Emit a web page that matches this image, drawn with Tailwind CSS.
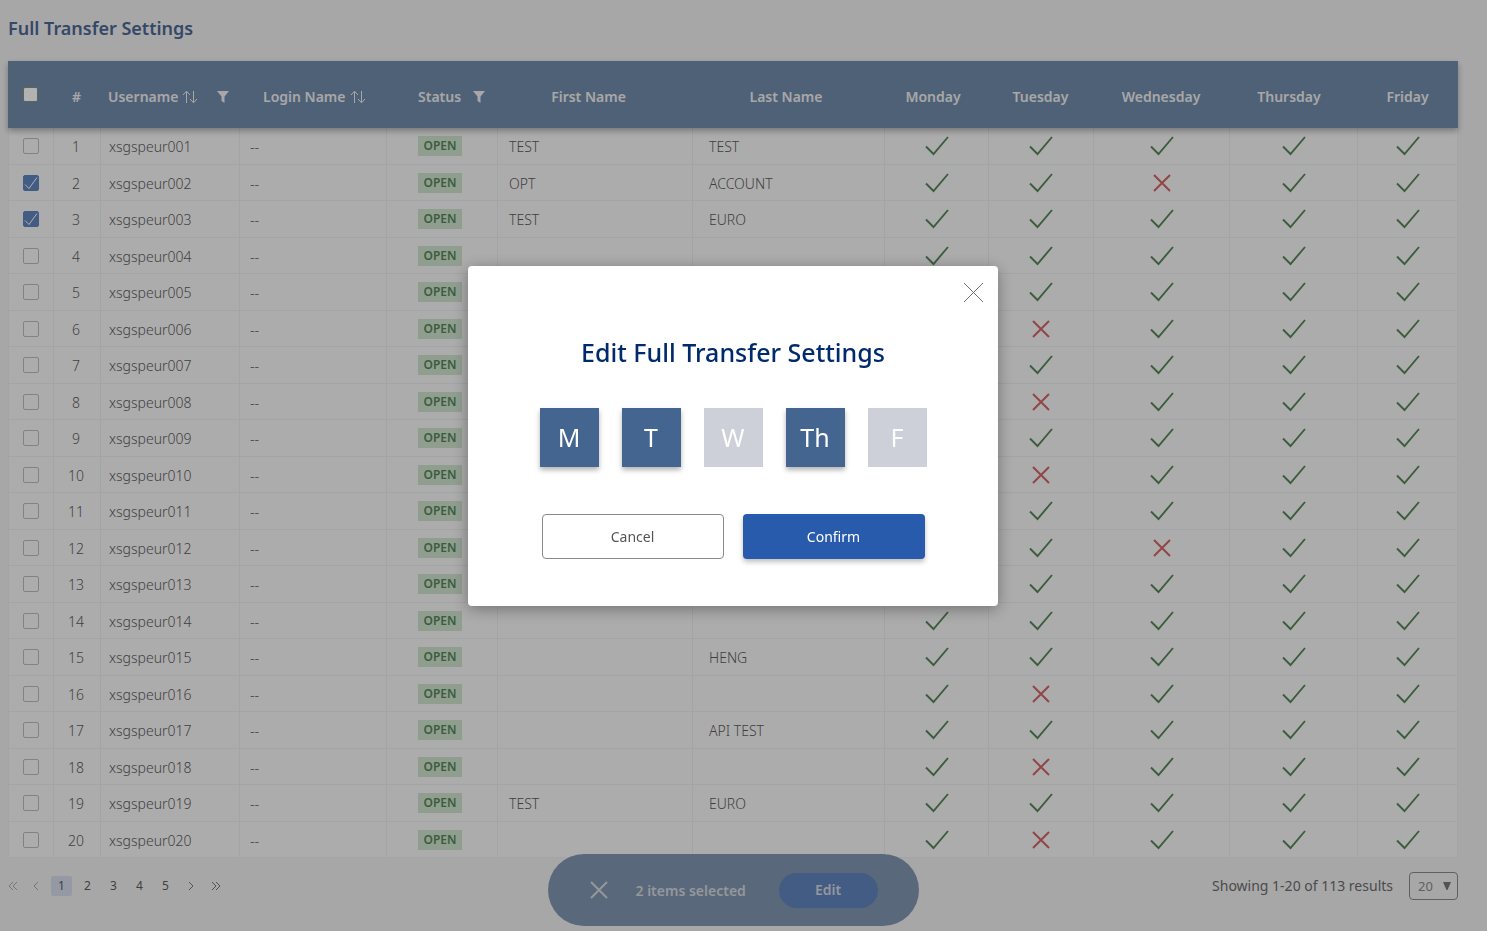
<!DOCTYPE html>
<html lang="en">
<head>
<meta charset="utf-8">
<meta name="viewport" content="width=device-width, initial-scale=1">
<title>Full Transfer Settings</title>
<script src="https://cdn.jsdelivr.net/npm/@tailwindcss/browser@4"></script>
</head>
<body class="min-h-screen overflow-x-hidden bg-[#f0f0f0] font-['Noto_Sans','Open_Sans',sans-serif] text-sm text-[#5c5c5c]">

<svg class="hidden" aria-hidden="true">
  <symbol id="tick" viewBox="0 0 24 20"><path d="M1 10.500L8.500 18L23 1" fill="none" stroke="currentColor" stroke-width="1.900"/></symbol>
  <symbol id="cross" viewBox="0 0 18 18"><path d="M1 1L17 17M17 1L1 17" fill="none" stroke="currentColor" stroke-width="2"/></symbol>
  <symbol id="sort" viewBox="0 0 16 14"><path d="M4.500 13V1.500M1 5L4.500 1.200L8 5M11.500 1V12.500M8 9L11.500 12.800L15 9" fill="none" stroke="currentColor"/></symbol>
  <symbol id="funnel" viewBox="0 0 12 12"><path d="M0 0H12L7.500 5.500V12L4.500 10V5.500Z" fill="currentColor"/></symbol>
</svg>

<main class="pl-2 pr-[29px]">
  <h1 class="pt-3.5 text-lg leading-7 font-semibold text-[#4d6796]">Full Transfer Settings</h1>

  <table class="mt-[19px] w-full table-fixed border-separate border-spacing-0">
    <colgroup>
      <col class="w-[45px]"><col class="w-[47px]"><col class="w-[139px]"><col class="w-[147px]"><col class="w-[111px]"><col class="w-[195px]"><col class="w-[192px]"><col class="w-[104px]"><col class="w-[105px]"><col class="w-[136px]"><col class="w-[128px]"><col class="w-[101px]">
    </colgroup>
    <thead class="relative bg-[#728bab] text-[#f0f0f0] shadow-[0_3px_6px_rgba(0,0,0,0.3)]">
      <tr class="h-[67px]">
        <th class="p-0"><input type="checkbox" aria-label="Select all users" class="mx-auto block size-[15px] appearance-none rounded-xs border border-[#8b8b8b] bg-white"></th>
        <th class="p-0 pt-1 font-semibold">#</th>
        <th class="p-0 pt-1 font-semibold"><div class="flex items-center pl-2">Username<button aria-label="Sort by username" class="ml-1"><svg class="h-3.5 w-4"><use href="#sort"/></svg></button><button aria-label="Filter username" class="ml-[19px]"><svg class="size-3"><use href="#funnel"/></svg></button></div></th>
        <th class="p-0 pt-1 font-semibold"><div class="flex items-center pl-6">Login Name<button aria-label="Sort by login name" class="ml-1"><svg class="h-3.5 w-4"><use href="#sort"/></svg></button></div></th>
        <th class="p-0 pt-1 font-semibold"><div class="flex items-center pl-8">Status<button aria-label="Filter status" class="ml-3"><svg class="size-3"><use href="#funnel"/></svg></button></div></th>
        <th class="p-0 pt-1 pr-3 font-semibold">First Name</th>
        <th class="p-0 pt-1 pr-1 font-semibold">Last Name</th>
        <th class="p-0 pt-1 pr-1.5 font-semibold">Monday</th>
        <th class="p-0 pt-1 font-semibold">Tuesday</th>
        <th class="p-0 pt-1 font-semibold">Wednesday</th>
        <th class="p-0 pt-1 pr-2 font-semibold">Thursday</th>
        <th class="p-0 pt-1 font-semibold">Friday</th>
      </tr>
    </thead>
    <tbody id="rows" class="bg-[#f7f7f7] font-light"></tbody>
  </table>

  <footer class="flex items-center justify-between pt-3.5">
    <nav aria-label="Pages" class="flex items-center text-xs">
      <button aria-label="First page" class="w-[17px] text-[#a4a9b2]"><svg class="h-2.5 w-[10px]" viewBox="0 0 10 10" fill="none" stroke="currentColor"><path d="M5 1L1 5L5 9M9 1L5 5L9 9"/></svg></button>
      <button aria-label="Previous page" class="flex w-[26px] justify-center pr-1 text-[#a4a9b2]"><svg class="h-2.5 w-1.5" viewBox="0 0 6 10" fill="none" stroke="currentColor"><path d="M5 1L1 5L5 9"/></svg></button>
      <button aria-current="page" class="h-5 w-[21px] rounded-xs bg-[#d4dbea]">1</button>
      <button class="ml-[5px] h-5 w-[21px]">2</button>
      <button class="ml-[5px] h-5 w-[21px]">3</button>
      <button class="ml-[5px] h-5 w-[21px]">4</button>
      <button class="ml-[5px] h-5 w-[21px]">5</button>
      <button aria-label="Next page" class="ml-1 flex w-[21px] justify-center text-[#777]"><svg class="h-2.5 w-1.5" viewBox="0 0 6 10" fill="none" stroke="currentColor"><path d="M1 1L5 5L1 9"/></svg></button>
      <button aria-label="Last page" class="ml-1 flex w-[21px] justify-center text-[#777]"><svg class="h-2.5 w-[10px]" viewBox="0 0 10 10" fill="none" stroke="currentColor"><path d="M1 1L5 5L1 9M5 1L9 5L5 9"/></svg></button>
    </nav>
    <div class="flex items-center gap-4">
      <label for="size" class="text-[#6c6c6c]">Showing 1-20 of 113 results</label>
      <div class="relative">
        <select id="size" class="block h-7 w-[49px] appearance-none rounded-sm border border-[#8a8a8a] pl-2 text-[13px] text-[#8a8a8a]"><option>20</option><option>50</option></select>
        <svg class="pointer-events-none absolute top-2.5 right-1.5 h-2 w-2.5 text-[#777]" viewBox="0 0 10 8"><path d="M1 0H9L5.500 8H4.500Z" fill="currentColor"/></svg>
      </div>
    </div>
  </footer>
</main>

<!-- Selection bar -->
<div class="fixed bottom-[5px] left-1/2 -ml-[196px] flex h-[72px] w-[371px] items-center rounded-full bg-[#8295b0] pl-[42px] text-[#d4d8df]">
  <button aria-label="Clear selection"><svg class="block size-[18px]"><use href="#cross"/></svg></button>
  <span class="ml-7 pt-0.5 font-semibold whitespace-nowrap">2 items selected</span>
  <button class="mr-[41px] ml-auto h-[35px] w-[99px] rounded-full bg-[#6085be] font-semibold">Edit</button>
</div>

<!-- Dialog over the dimmed page -->
<div class="fixed inset-0 flex items-center justify-center bg-black/30 pr-[21px] pb-[60px]">
  <section role="dialog" aria-modal="true" aria-labelledby="dlg" class="relative flex w-[530px] flex-col items-center rounded-sm bg-white pt-[68px] pb-[47px] shadow-[0_3px_16px_rgba(0,0,0,0.35)]">
    <button aria-label="Close" class="absolute top-4 right-3.5 text-[#707070]"><svg class="block size-[21px]" viewBox="0 0 21 21" stroke="currentColor"><path d="M1 1L20 20M20 1L1 20"/></svg></button>
    <h2 id="dlg" class="text-[25px] leading-9 font-medium text-[#002a6c]">Edit Full Transfer Settings</h2>
    <div class="mt-[38px] flex gap-[23px] text-[25px] text-white">
      <button aria-pressed="true" class="size-[59px] bg-[#446590] pt-0.5 shadow-[0_3px_5px_rgba(0,0,0,0.3)]">M</button>
      <button aria-pressed="true" class="size-[59px] bg-[#446590] pt-0.5 shadow-[0_3px_5px_rgba(0,0,0,0.3)]">T</button>
      <button aria-pressed="false" class="size-[59px] bg-[#cdd0d8] pt-0.5">W</button>
      <button aria-pressed="true" class="size-[59px] bg-[#446590] pt-0.5 shadow-[0_3px_5px_rgba(0,0,0,0.3)]">Th</button>
      <button aria-pressed="false" class="size-[59px] bg-[#cdd0d8] pt-0.5">F</button>
    </div>
    <div class="mt-[47px] flex gap-[19px]">
      <button class="h-[45px] w-[182px] rounded-sm border border-[#8a8a8a] pt-0.5 text-[#555]">Cancel</button>
      <button class="h-[45px] w-[182px] rounded-sm bg-[#295bac] pt-0.5 text-white shadow-[0_3px_5px_rgba(0,0,0,0.25)]">Confirm</button>
    </div>
  </section>
</div>

<script>
  const names = {1: ['TEST', 'TEST'], 2: ['OPT', 'ACCOUNT'], 3: ['TEST', 'EURO'], 15: ['', 'HENG'], 17: ['', 'API TEST'], 19: ['TEST', 'EURO']};
  const blocked = {2: 2, 6: 1, 8: 1, 10: 1, 12: 2, 16: 1, 18: 1, 20: 1};
  const yes = '<svg role="img" aria-label="Yes" class="mx-auto block h-5 w-6 text-[#568658]"><use href="#tick"/></svg>';
  const no = '<svg role="img" aria-label="No" class="mx-auto block size-[18px] text-[#d26464]"><use href="#cross"/></svg>';
  const td = 'p-0 border-l border-b border-[#e9ebed] last:border-r';
  let html = '';
  for (let i = 1; i <= 20; i++) {
    const user = 'xsgspeur' + String(i).padStart(3, '0');
    const on = i === 2 || i === 3;
    const [first, last] = names[i] || ['', ''];
    html += `<tr class="h-9 odd:h-[37px]">
      <td class="${td}"><label class="relative mx-auto block size-4"><input type="checkbox" aria-label="Select ${user}" ${on ? 'checked' : ''} class="block size-4 appearance-none rounded-xs border border-[#bababa] checked:border-[#6085be] checked:bg-[#6085be]">${on ? '<svg class="pointer-events-none absolute inset-0 size-4" viewBox="0 0 16 16" fill="none" stroke="#fff"><path d="M2 9.500L6 13.500L14 2.500"/></svg>' : ''}</label></td>
      <td class="${td} pt-0.5 pr-0.5 text-center">${i}</td>
      <td class="${td} pt-0.5 pl-2">${user}</td>
      <td class="${td} pt-0.5 pl-2.5">--</td>
      <td class="${td} pl-[31px]"><span class="block h-5 w-11 bg-[#cfe3cf] text-center text-xs leading-5 font-semibold text-[#568658]">OPEN</span></td>
      <td class="${td} pt-0.5 pl-[11px]">${first}</td>
      <td class="${td} pt-0.5 pl-4">${last}</td>
      ${[0, 1, 2, 3, 4].map(d => `<td class="${td}">${blocked[i] === d ? no : yes}</td>`).join('')}
    </tr>`;
  }
  document.getElementById('rows').innerHTML = html;
</script>
</body>
</html>
